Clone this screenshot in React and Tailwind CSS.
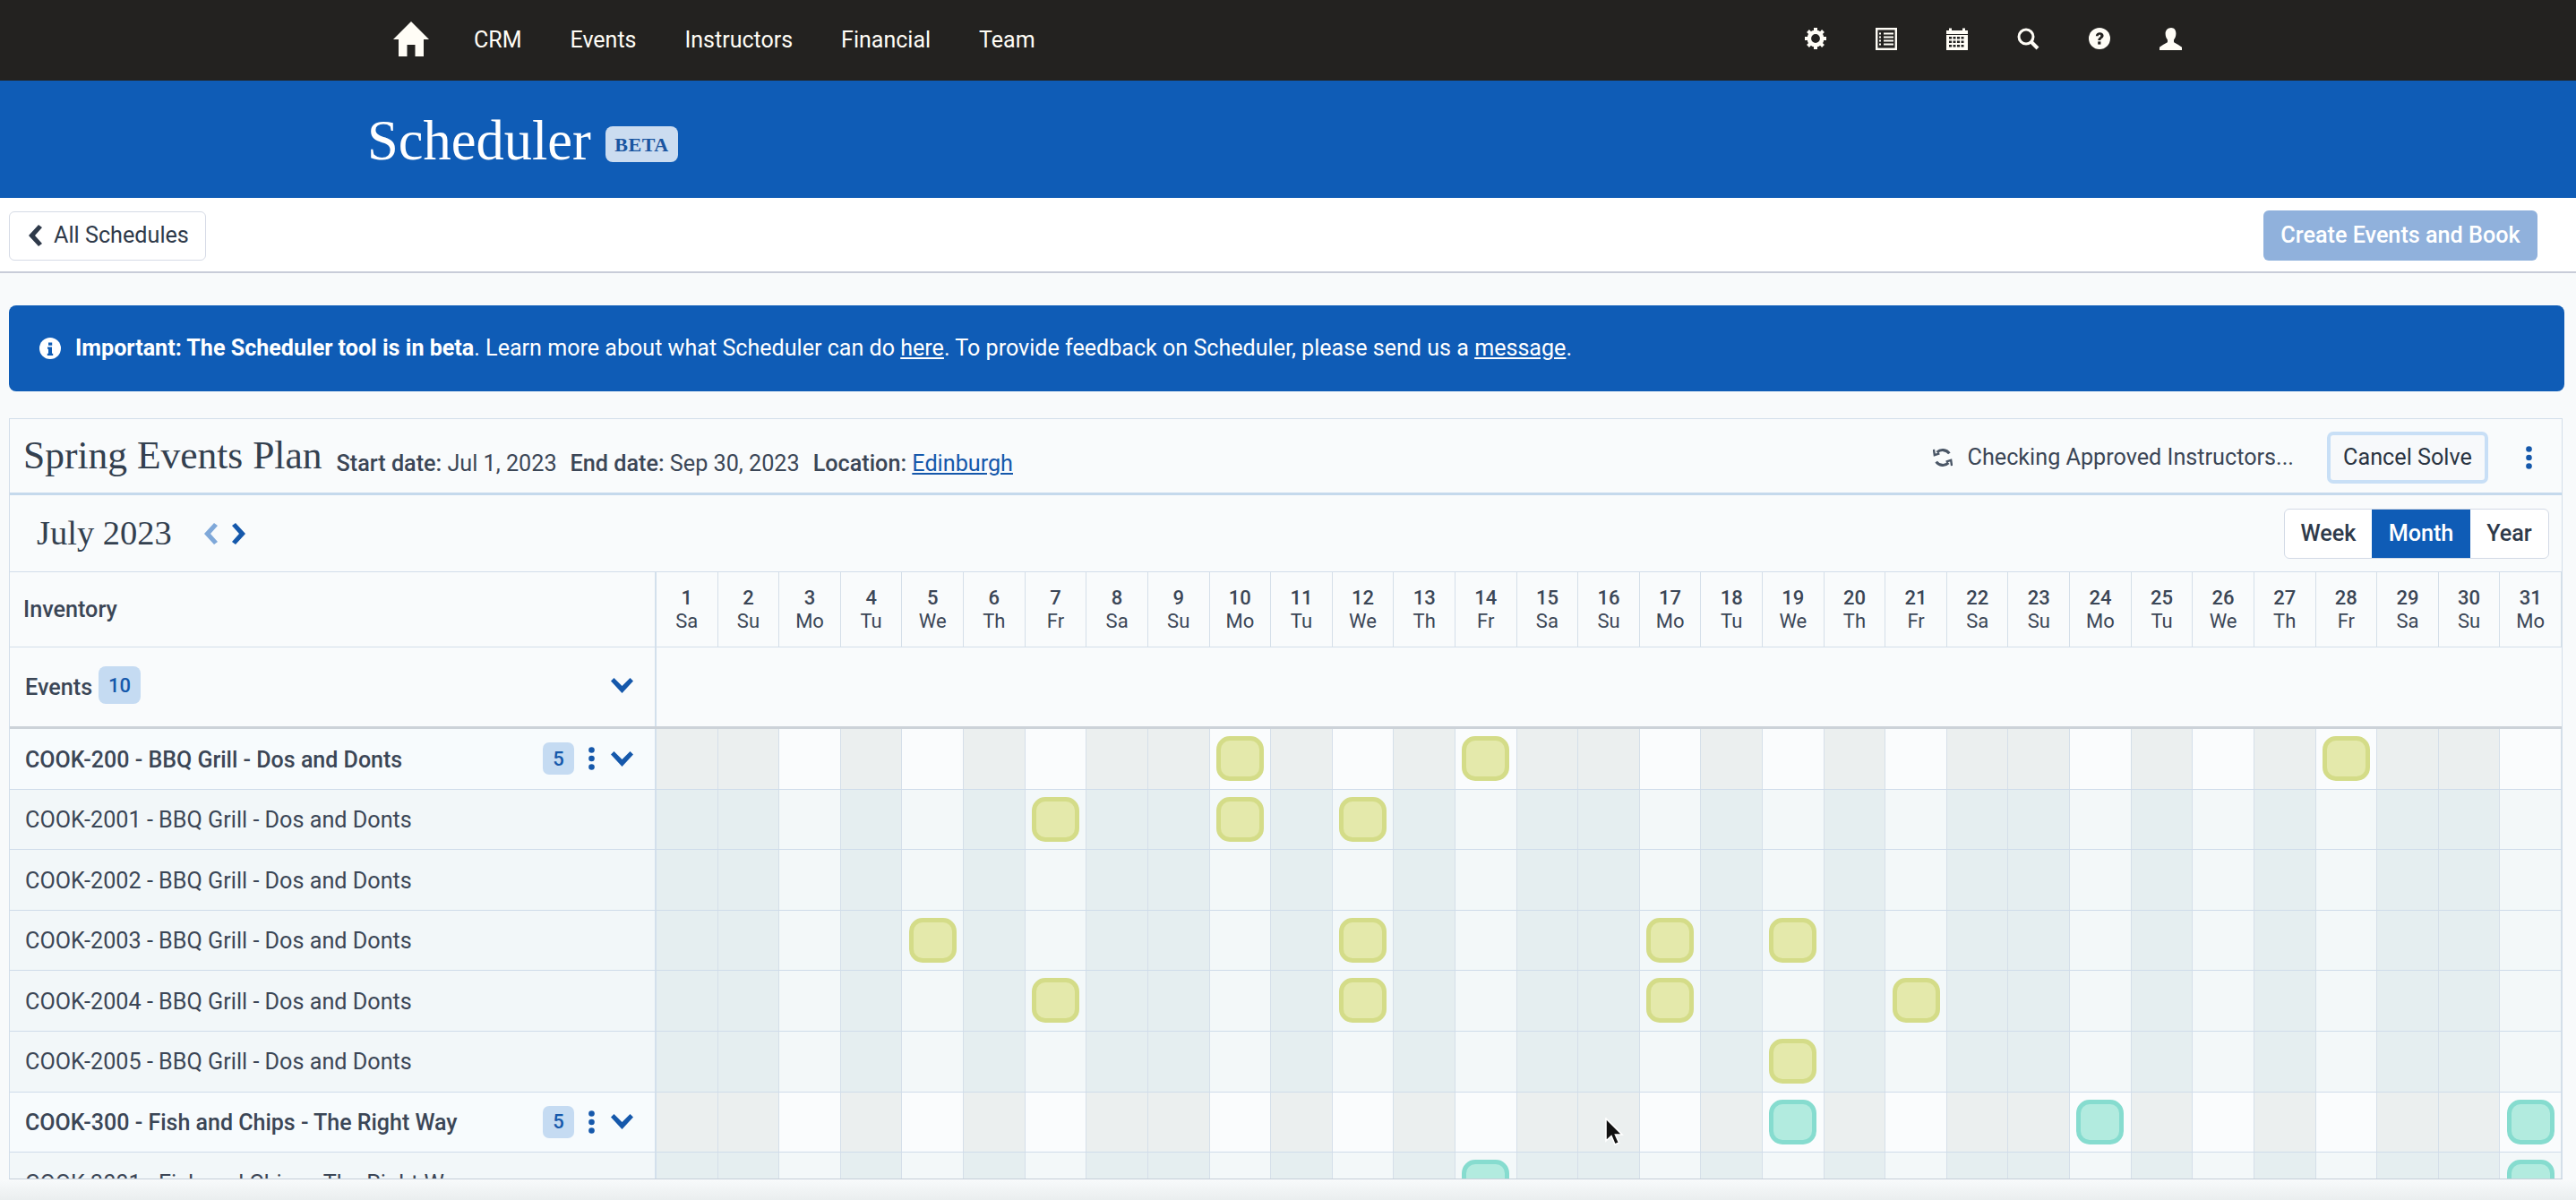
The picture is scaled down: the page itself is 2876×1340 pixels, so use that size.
import React from "react";

const days = ["Sa","Su","Mo","Tu","We","Th","Fr"];
const cols = Array.from({ length: 31 }, (_, i) => ({ n: i + 1, d: days[i % 7] }));
const isLight = (d) => d === "Mo" || d === "We" || d === "Fr";

const rows = [
  { label: "COOK-200 - BBQ Grill - Dos and Donts", head: true, chips: [10, 14, 28], tone: "g" },
  { label: "COOK-2001 - BBQ Grill - Dos and Donts", chips: [7, 10, 12], tone: "g" },
  { label: "COOK-2002 - BBQ Grill - Dos and Donts", chips: [], tone: "g" },
  { label: "COOK-2003 - BBQ Grill - Dos and Donts", chips: [5, 12, 17, 19], tone: "g" },
  { label: "COOK-2004 - BBQ Grill - Dos and Donts", chips: [7, 12, 17, 21], tone: "g" },
  { label: "COOK-2005 - BBQ Grill - Dos and Donts", chips: [19], tone: "g" },
  { label: "COOK-300 - Fish and Chips - The Right Way", head: true, chips: [19, 24, 31], tone: "t" },
  { label: "COOK-3001 - Fish and Chips - The Right Way", chips: [14, 31], tone: "t" },
];

const Home = () => (
  <svg viewBox="0 0 40 39" className="w-10 h-[39px]" fill="#fffdf6">
    <path d="M20 0 L40 20 L34 20 L34 39 L24.5 39 L24.5 26 L15.5 26 L15.5 39 L6 39 L6 20 L0 20 Z" />
  </svg>
);
const Gear = () => (
  <svg viewBox="0 0 24 24" className="w-6 h-6">
    <circle cx="12" cy="12" r="7.2" fill="none" stroke="#fffdf6" strokeWidth="4.6" />
    <g stroke="#fffdf6" strokeWidth="4" strokeLinecap="butt">
      <path d="M12 0v4M12 20v4M0 12h4M20 12h4M3.5 3.5l2.8 2.8M17.7 17.7l2.8 2.8M3.5 20.5l2.8-2.8M17.7 6.3l2.8-2.8" />
    </g>
  </svg>
);
const ListIcon = () => (
  <svg viewBox="0 0 24 25" className="w-6 h-[25px]" fill="none" stroke="#fffdf6">
    <rect x="1.2" y="1.2" width="21.6" height="22.6" strokeWidth="2.4" />
    <path d="M9 6.5h11M9 10.5h11M9 14.5h11M9 18.5h11" strokeWidth="1.8" />
    <path d="M4 6.5h2M4 10.5h2M4 14.5h2M4 18.5h2" strokeWidth="1.8" />
  </svg>
);
const Cal = () => (
  <svg viewBox="0 0 24 25" className="w-6 h-[25px]" fill="#fffdf6">
    <path d="M0 3h3V0.5h3V3h12V0.5h3V3h3v4H0z" />
    <path fillRule="evenodd" d="M0 8h24v17H0zM3 10v2.5h3V10zm4.5 0v2.5h3V10zm4.5 0v2.5h3V10zm4.5 0v2.5h3V10zM3 14.5V17h3v-2.5zm4.5 0V17h3v-2.5zm4.5 0V17h3v-2.5zm4.5 0V17h3v-2.5zM3 19v2.5h3V19zm4.5 0v2.5h3V19zm4.5 0v2.5h3V19zm4.5 0v2.5h3V19z" />
  </svg>
);
const Search = () => (
  <svg viewBox="0 0 25 25" className="w-[25px] h-[25px]" fill="none" stroke="#fffdf6">
    <circle cx="10" cy="10" r="8" strokeWidth="3" />
    <path d="M16 16l7 7" strokeWidth="4" />
  </svg>
);
const Help = () => (
  <svg viewBox="0 0 24 24" className="w-6 h-6">
    <circle cx="12" cy="12" r="12" fill="#fffdf6" />
    <path d="M7.8 9.2C8 6.6 10 5.2 12.3 5.2c2.6 0 4.3 1.5 4.3 3.6 0 3-3.3 3-3.3 5.3h-3c0-3.5 3-3.6 3-5.2 0-.8-.5-1.2-1.2-1.2-.9 0-1.3.6-1.4 1.6z" fill="#232220" />
    <rect x="10.2" y="15.4" width="3.2" height="3.2" fill="#232220" />
  </svg>
);
const User = () => (
  <svg viewBox="0 0 26 25" className="w-[26px] h-[25px]" fill="#fffdf6">
    <path d="M13 0c3.6 0 5.4 2.8 5.4 6.4 0 2.8-1 5.2-2.4 7v2.4c0 1 5.5 3 9 6V25H0v-3.2c3.5-3 9-5 9-6v-2.4c-1.4-1.8-2.4-4.2-2.4-7C6.6 2.8 9.4 0 13 0z" />
  </svg>
);
const Chev = ({ dir = "down", color = "#1558ab", cls = "" }) => {
  if (dir === "down") {
    return (
      <svg viewBox="0 0 27 17" className={"w-[27px] h-[17px] " + cls} fill={color}>
        <path d="M1 3.5 L4.5 0 L13.5 9 L22.5 0 L26 3.5 L13.5 17 Z" />
      </svg>
    );
  }
  return (
    <svg viewBox="0 0 15 24" className={"w-[15px] h-[24px] " + cls} fill={color}>
      <path d={dir === "left" ? "M11 0 L15 3 L7 12 L15 21 L11 24 L0 12 Z" : "M4 0 L0 3 L8 12 L0 21 L4 24 L15 12 Z"} />
    </svg>
  );
};
const Dots = ({ color = "#1558ab" }) => (
  <svg viewBox="0 0 7 26" className="w-[7px] h-[26px]" fill={color}>
    <circle cx="3.5" cy="3.5" r="3.3" />
    <circle cx="3.5" cy="13" r="3.3" />
    <circle cx="3.5" cy="22.5" r="3.3" />
  </svg>
);

function Chip({ tone }) {
  return (
    <div
      className={
        tone === "g"
          ? "w-[53px] h-[50px] rounded-[15px] border-[5px] border-[#d4dc88] bg-[#e4e9ab]"
          : "w-[53px] h-[50px] rounded-[15px] border-[5px] border-[#86dccf] bg-[#b2ebdf]"
      }
    />
  );
}

function Row({ r }) {
  return (
    <div className="grid grid-cols-[722px_repeat(31,minmax(0,1fr))] h-[67.6px] border-b border-[#cfdcea]">
      <div
        className={
          "flex items-center pl-[17px] pr-[23px] border-r-2 border-[#d3e0ec] text-[#3b4656] " +
          (r.head ? "bg-[#f7fbfd] font-medium text-[25px]" : "bg-[#f2f7f9] text-[25.2px]")
        }
      >
        <span className="truncate pt-[2px]">{r.label}</span>
        {r.head && (
          <div className="ml-auto flex items-center">
            <span className="w-[35px] h-[36px] rounded-[7px] bg-[#c5dbf2] text-[#1558ab] font-medium text-[22px] flex items-center justify-center">5</span>
            <span className="ml-[16px] mr-[17px] flex"><Dots /></span>
            <Chev />
          </div>
        )}
      </div>
      {cols.map((c) => (
        <div
          key={c.n}
          className={
            "flex justify-center pt-[8px] border-r border-[#d5dfe9] " +
            (isLight(c.d) ? (r.head ? "bg-[#fafcfd]" : "bg-[#f3f8f9]") : r.head ? "bg-[#ebefef]" : "bg-[#e5eef0]")
          }
        >
          {r.chips.includes(c.n) && <Chip tone={r.tone} />}
        </div>
      ))}
    </div>
  );
}

export default function App() {
  return (
    <div className="h-[1340px] overflow-hidden bg-[#f8fafb] font-['Roboto',sans-serif] text-[#3b4656] relative">
      <nav className="h-[90px] bg-[#232220] text-[#fffdf6]">
        <div className="mx-auto w-[1998px] h-full flex items-center justify-between">
          <div className="flex items-center text-[25px]">
            <a className="mr-[23px] -mt-[4px]"><Home /></a>
            <a className="px-[27px]">CRM</a>
            <a className="px-[27px]">Events</a>
            <a className="px-[27px]">Instructors</a>
            <a className="px-[27px]">Financial</a>
            <a className="px-[27px]">Team</a>
          </div>
          <div className="flex items-center gap-[55px] -mt-[4px]">
            <Gear />
            <ListIcon />
            <Cal />
            <Search />
            <Help />
            <User />
          </div>
        </div>
      </nav>

      <header className="h-[131px] bg-[#0f5cb6] pl-[410px] flex items-center">
        <h1 className="font-['Liberation_Serif',serif] text-[62.5px] leading-none text-white mt-[3px]">Scheduler</h1>
        <span className="ml-[16px] mt-[11px] w-[81px] h-[40px] rounded-[8px] bg-[#cbdcf0] flex items-center justify-center font-['Liberation_Serif',serif] font-bold text-[22px] text-[#1a55a0] tracking-[0.5px]">BETA</span>
      </header>

      <div className="h-[84px] bg-white border-b-2 border-[#c8ccd8] pl-[10px] pr-[43px] pt-[1px] flex items-center justify-between">
        <button className="w-[220px] h-[55px] mt-[1px] border border-[#d6dbe6] rounded-[6px] bg-white flex items-center pl-[21px] text-[25.2px] text-[#2f3a4a]">
          <Chev dir="left" color="#2f3a4a" cls="mr-[13px]" />
          All Schedules
        </button>
        <button className="w-[306px] h-[56px] rounded-[6px] bg-[#90b1dc] text-white font-medium text-[25.2px]">Create Events and Book</button>
      </div>

      <div className="mt-[36px] ml-[10px] mr-[13px] h-[96px] rounded-[8px] bg-[#0f5cb6] text-white text-[25.1px] flex items-center pl-[34px]">
        <svg viewBox="0 0 24 24" className="w-[24px] h-[24px] mr-[16px]">
          <circle cx="12" cy="12" r="12" fill="#fff" />
          <path d="M10 5.5h4.2v3.2H10zM9 10.5h5v7.2h1.2V20H8.8v-2.3H10v-4.9H9z" fill="#0f5cb6" />
        </svg>
        <p>
          <span className="font-bold">Important: The Scheduler tool is in beta</span>. Learn more about what Scheduler can do <a className="underline">here</a>. To provide feedback on Scheduler, please send us a <a className="underline">message</a>.
        </p>
      </div>

      <section className="mt-[30px] ml-[10px] w-[2851px] h-[850px] border border-[#d3deea] border-b-[#c6cfd9] overflow-hidden bg-[#f9fbfc]">
        <div className="h-[85px] border-b-[3px] border-[#c5d9ec] flex items-center pl-[15px] pr-[33px]">
          <h2 className="font-['Liberation_Serif',serif] text-[43.5px] text-[#33404f] mr-[16px]">Spring Events Plan</h2>
          <div className="text-[25.2px] mt-[17px] flex gap-[15px]">
            <span><span className="font-medium">Start date:</span> Jul 1, 2023</span>
            <span><span className="font-medium">End date:</span> Sep 30, 2023</span>
            <span><span className="font-medium">Location:</span> <a className="text-[#1558ab] underline">Edinburgh</a></span>
          </div>
          <div className="ml-auto flex items-center text-[25.2px] mt-[3px]">
            <svg viewBox="0 0 24 24" className="w-[22px] h-[22px] mr-[17px]" fill="none" stroke="#4a5666" strokeWidth="3.4">
              <path d="M20 7A10 10 0 0 0 5 5.5" />
              <path d="M4 17A10 10 0 0 0 19 18.5" />
              <path d="M1 2l1 7 6-2M23 22l-1-7-6 2" strokeWidth="2.6" />
            </svg>
            <span>Checking Approved Instructors...</span>
            <button className="ml-[37px] w-[180px] h-[58px] rounded-[7px] bg-[#f7f9fb] border-[4px] border-[#c8dff6] text-[#2a3442]">Cancel Solve</button>
            <span className="ml-[42px] flex"><Dots /></span>
          </div>
        </div>

        <div className="h-[85px] flex items-center pl-[30px] pr-[14px]">
          <h3 className="font-['Liberation_Serif',serif] text-[38.5px] text-[#33404f]">July 2023</h3>
          <div className="ml-[36px] flex items-center gap-[16px]">
            <Chev dir="left" color="#7fa8d9" />
            <Chev dir="right" />
          </div>
          <div className="ml-auto h-[56px] flex rounded-[6px] border border-[#d3dae6] bg-white overflow-hidden text-[25.2px] font-medium">
            <span className="w-[97px] flex items-center justify-center text-[#2f3a4a]">Week</span>
            <span className="w-[110px] flex items-center justify-center bg-[#0f5cb6] text-white">Month</span>
            <span className="w-[87px] flex items-center justify-center text-[#2f3a4a]">Year</span>
          </div>
        </div>

        <div className="grid grid-cols-[722px_repeat(31,minmax(0,1fr))] h-[85px] border-t border-b border-[#d3deea]">
          <div className="flex items-center pl-[15px] border-r-2 border-[#d3e0ec] text-[25.2px] font-medium">Inventory</div>
          {cols.map((c) => (
            <div key={c.n} className="flex flex-col items-center justify-center border-r border-[#d5dfe9] text-[22px] leading-[26px]">
              <span className="font-medium">{c.n}</span>
              <span>{c.d}</span>
            </div>
          ))}
        </div>

        <div className="grid grid-cols-[722px_1fr] h-[91px] border-b-[3px] border-[#ccd2d8]">
          <div className="flex items-center pl-[17px] pr-[23px] border-r-2 border-[#d3e0ec]">
            <span className="text-[25.2px] font-medium pt-[2px]">Events</span>
            <span className="ml-[7px] w-[47px] h-[42px] rounded-[8px] bg-[#c5dbf2] text-[#1558ab] font-medium text-[22px] flex items-center justify-center -mt-[4px]">10</span>
            <span className="ml-auto flex -mt-[3px]"><Chev /></span>
          </div>
          <div />
        </div>

        {rows.map((r) => (
          <Row key={r.label} r={r} />
        ))}
      </section>

      <div className="h-[23px] bg-gradient-to-b from-[#f8fafb] to-[#eaeeef]" />

      <svg viewBox="0 0 22 34" className="absolute left-[1791px] top-[1248px] w-[22px] h-[34px]">
        <path d="M2 1 L2 26 L8 20.5 L12 30 L16.5 28 L12.5 19 L20 19 Z" fill="#111" stroke="#fff" strokeWidth="1.6" />
      </svg>
    </div>
  );
}
